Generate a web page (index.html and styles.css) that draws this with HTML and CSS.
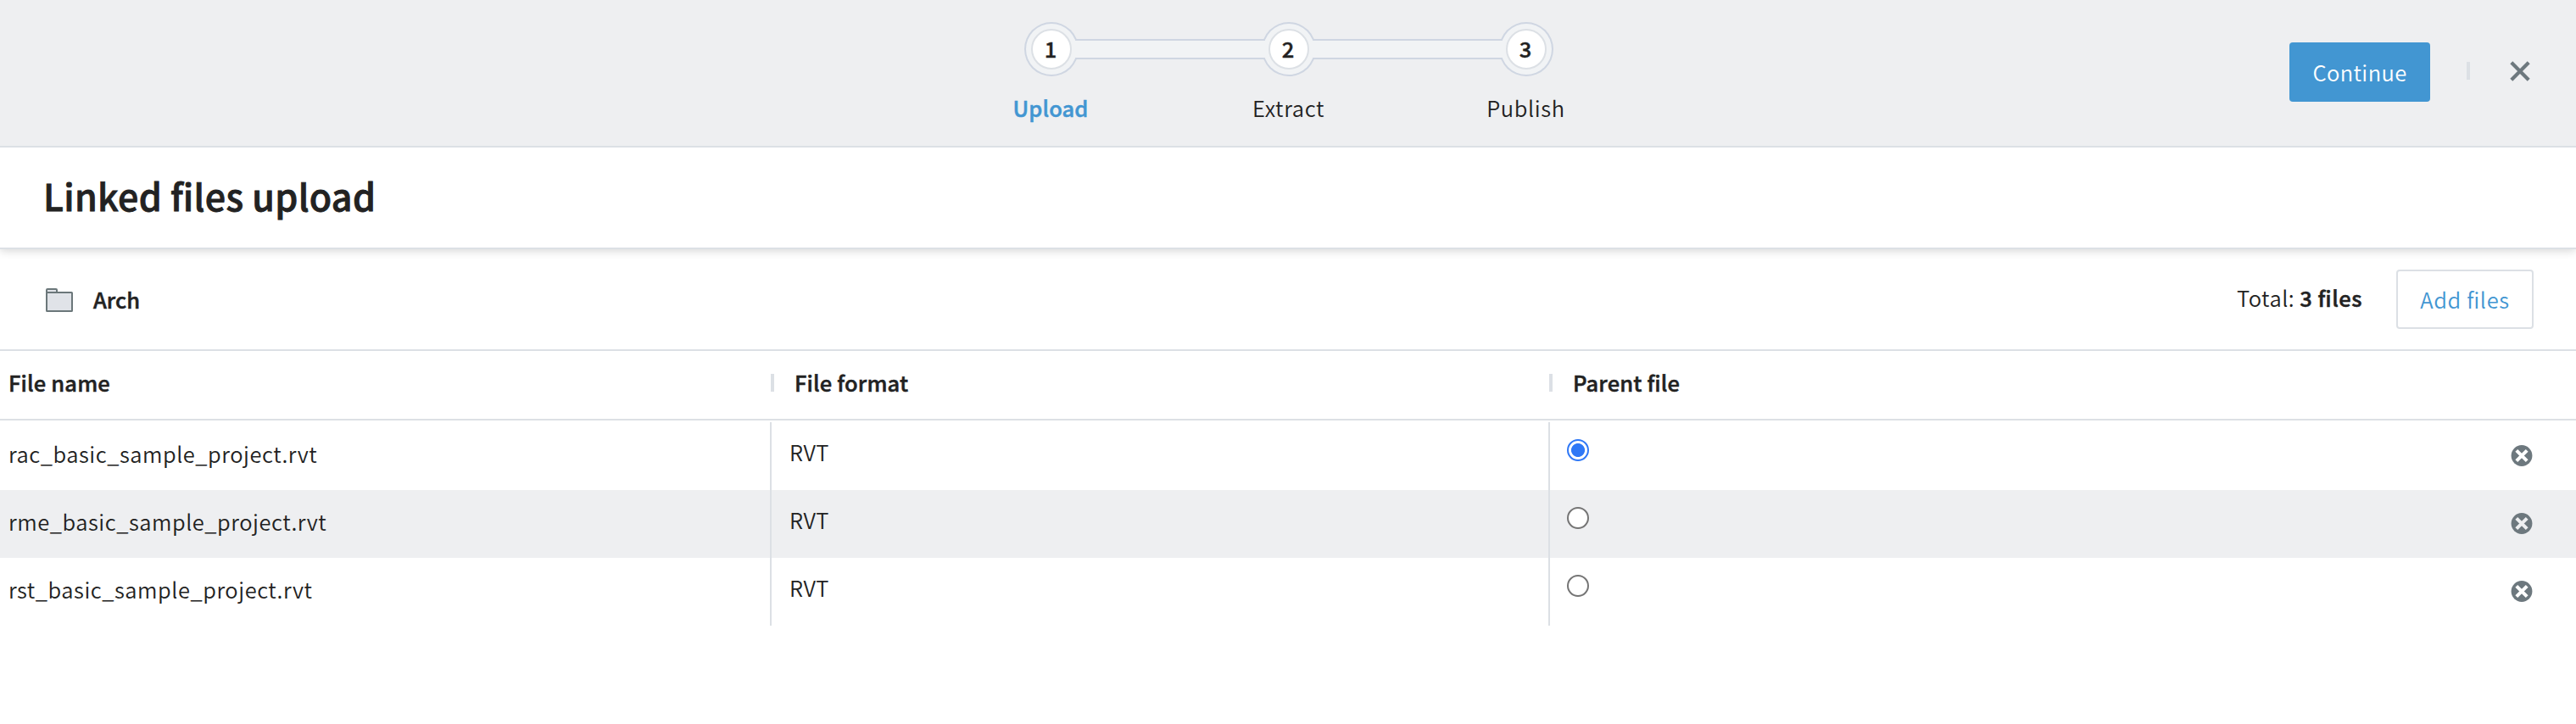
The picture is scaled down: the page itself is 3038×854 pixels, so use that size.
FILE: index.html
```html
<!DOCTYPE html>
<html lang="en">
<head>
<meta charset="utf-8">
<title>Linked files upload</title>
<link rel="stylesheet" href="styles.css">
</head>
<body>
<header class="topbar">
  <div class="stepper">
    <svg class="track" width="624" height="64" viewBox="0 0 624 64">
      <g fill="#cfd6e2"><circle cx="32" cy="32" r="32"/><circle cx="312" cy="32" r="32"/><circle cx="592" cy="32" r="32"/><rect x="32" y="20" width="560" height="24"/></g>
      <g fill="#f1f3f5"><circle cx="32" cy="32" r="30"/><circle cx="312" cy="32" r="30"/><circle cx="592" cy="32" r="30"/><rect x="32" y="22" width="560" height="20"/></g>
      <g fill="#fff" stroke="#dce0e5" stroke-width="2"><circle cx="32" cy="32" r="23"/><circle cx="312" cy="32" r="23"/><circle cx="592" cy="32" r="23"/></g>
      <g class="step-number"><text x="31" y="42">1</text><text x="311" y="42">2</text><text x="591" y="42">3</text></g>
    </svg>
    <div class="step-labels"><span class="active">Upload</span><span>Extract</span><span>Publish</span></div>
  </div>
  <div class="actions">
    <button class="btn primary">Continue</button>
    <span class="tick"></span>
    <svg class="close" width="24" height="24" viewBox="0 0 24 24"><path d="M1.8 1.8L22.2 22.2M22.2 1.8L1.8 22.2" stroke="#6d787e" stroke-width="4.2"/></svg>
  </div>
</header>
<section class="title"><h1>Linked files upload</h1></section>
<section class="toolbar">
  <svg class="folder" width="32" height="28" viewBox="0 0 32 28"><path d="M1 5V2Q1 1 2 1H12Q13 1 13 2V5" fill="#e0e3e8" stroke="#6b777a" stroke-width="2"/><rect x="1" y="5" width="30" height="22" rx="0.6" fill="#e0e3e8" stroke="#6b777a" stroke-width="2"/></svg>
  <strong>Arch</strong>
  <div class="total">Total: <strong class="count">3 files</strong></div>
  <button class="btn outline">Add files</button>
</section>
<main class="table">
  <div class="row head">
    <div class="name">File name</div>
    <div class="format"><i class="tick"></i>File format</div>
    <div class="parent"><i class="tick"></i>Parent file</div>
  </div>
  <div class="rows">
    <div class="row">
      <div class="name">rac_basic_sample_project.rvt</div><div class="format">RVT</div>
      <div class="parent"><span class="radio checked"></span><svg class="remove" width="26" height="26" viewBox="0 0 26 26"><circle cx="13" cy="12.5" r="12.4" fill="#6d787e"/><path d="M6.8 6.3L19.2 18.7M19.2 6.3L6.8 18.7" stroke="#fff" stroke-width="4"/></svg></div>
    </div>
    <div class="row alt">
      <div class="name">rme_basic_sample_project.rvt</div><div class="format">RVT</div>
      <div class="parent"><span class="radio"></span><svg class="remove" width="26" height="26" viewBox="0 0 26 26"><circle cx="13" cy="12.5" r="12.4" fill="#6d787e"/><path d="M6.8 6.3L19.2 18.7M19.2 6.3L6.8 18.7" stroke="#eeeff1" stroke-width="4"/></svg></div>
    </div>
    <div class="row">
      <div class="name">rst_basic_sample_project.rvt</div><div class="format">RVT</div>
      <div class="parent"><span class="radio"></span><svg class="remove" width="26" height="26" viewBox="0 0 26 26"><circle cx="13" cy="12.5" r="12.4" fill="#6d787e"/><path d="M6.8 6.3L19.2 18.7M19.2 6.3L6.8 18.7" stroke="#fff" stroke-width="4"/></svg></div>
    </div>
  </div>
</main>
</body>
</html>
```
FILE: styles.css
```css
* { box-sizing: border-box; }
body { margin: 0; background: #fff; color: #222; font: 350 25.5px/36px "Noto Sans CJK SC", "Noto Sans", sans-serif; letter-spacing: .65px; font-feature-settings: "liga" 1; }
.topbar { height: 174px; background: #eeeff1; border-bottom: 2px solid #dce0e5; display: grid; grid-template-columns: 1fr 624px 1fr; }
.stepper { grid-column: 2; padding-top: 26px; margin-left: 1px; margin-right: -1px; }
.track { display: block; }
.step-number { font-weight: 500; font-size: 25.5px; letter-spacing: 0; text-anchor: middle; fill: #222; stroke: #222; stroke-width: .4px; }
.step-labels { display: flex; justify-content: space-between; margin: 19px -68px 0; }
.step-labels > span { width: 200px; text-align: center; padding-right: 1px; }
.step-labels .active { color: #4296d2; font-weight: 500; -webkit-text-stroke: .5px; letter-spacing: .1px; padding-right: 2px; }
.actions { display: flex; justify-content: flex-end; align-items: flex-start; padding: 50px 54px 0 0; }
.btn { height: 70px; border: 0; border-radius: 4px; font: inherit; letter-spacing: inherit; font-feature-settings: inherit; padding: 0; text-align: center; }
.primary { width: 166px; background: #4296d2; color: #fff; letter-spacing: .4px; }
.actions .tick { margin: 23px 47px 0 43px; }
.tick { width: 4px; height: 21px; background: #dce0e5; flex: none; }
.close { margin-top: 22px; }
.title { height: 120px; border-bottom: 2px solid #dce0e5; display: flex; align-items: center; padding: 0 0 7px 51px; box-shadow: 0 2px 10px rgba(0,0,0,.16); clip-path: inset(0 0 -14px 0); }
h1 { margin: 0; font-size: 43px; line-height: 60px; font-weight: 500; letter-spacing: .3px; -webkit-text-stroke: .8px; }
.toolbar { height: 120px; border-bottom: 2px solid #dce0e5; display: flex; align-items: center; padding: 0 50px 0 54px; }
strong { font-weight: 500; letter-spacing: 0; -webkit-text-stroke: .5px; }
.count { letter-spacing: .5px; }
.folder { margin: 2px 24px 0 0; }
.total { margin-left: auto; padding-bottom: 4px; letter-spacing: .5px; }
.outline { width: 162px; margin-left: 40px; background: #fff; border: 2px solid #dce0e5; color: #4296d2; }
.row { display: grid; grid-template-columns: 908px 918px 1fr; height: 80px; }
.row > div { display: flex; align-items: center; }
.head { height: 82px; border-bottom: 2px solid #dce0e5; font-weight: 500; letter-spacing: .15px; -webkit-text-stroke: .5px; }
.name { padding: 0 0 6px 10px; }
.rows .name { letter-spacing: .53px; }
.head .format, .head .parent { padding: 0 0 6px 1px; gap: 24px; }
.rows { padding-top: 2px; }
.alt { background: #eeeff1; }
.rows .format { border-left: 2px solid #dce0e5; padding: 0 0 10px 21px; letter-spacing: .3px; }
.rows .parent { border-left: 2px solid #dce0e5; padding: 0 51px 0 20px; justify-content: space-between; }
.radio { width: 26px; height: 26px; border: 2px solid #757575; border-radius: 50%; background: #fff; margin-bottom: 14px; }
.checked { border-color: #2f78f6; background: radial-gradient(circle, #2f78f6 7.6px, #fff 8.4px); }
```
